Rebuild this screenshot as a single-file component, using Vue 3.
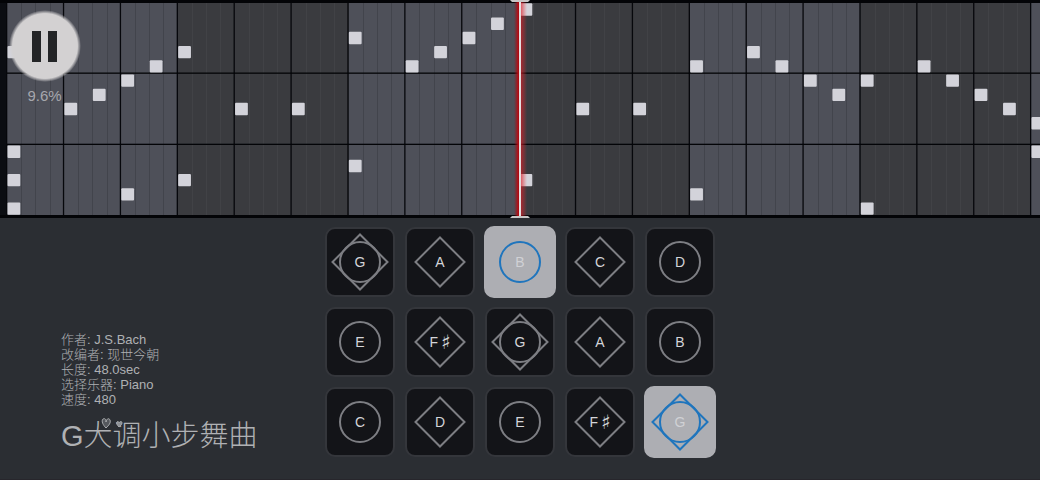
<script setup>
import { ref } from 'vue'

const step = 14.222
const originX = 7
const bars = Array.from({ length: 19 }, (_, i) => i)
const ticks = Array.from({ length: 73 }, (_, i) => i).filter((i) => i % 4 !== 0)
const measures = Array.from({ length: 7 }, (_, i) => i)

// [time step, key row] pairs
const notes = [
  [0, 3], [0, 10], [0, 12], [0, 14], [4, 7], [6, 6], [8, 5], [8, 13], [10, 4],
  [12, 3], [12, 12], [16, 7], [20, 7], [24, 2], [24, 11], [28, 4], [30, 3],
  [32, 2], [34, 1], [36, 0], [36, 12], [40, 7], [44, 7], [48, 4], [48, 13],
  [52, 3], [54, 4], [56, 5], [58, 6], [60, 5], [60, 14], [64, 4], [66, 5],
  [68, 6], [70, 7], [72, 8], [72, 10]
]
const atStep = (s) => originX + s * step
const atRow = (r) => 3 + r * step

const keys = ref([
  { n: 'G', s: 'both' }, { n: 'A', s: 'diamond' }, { n: 'B', s: 'circle', on: true }, { n: 'C', s: 'diamond' }, { n: 'D', s: 'circle' },
  { n: 'E', s: 'circle' }, { n: 'F', sharp: true, s: 'diamond' }, { n: 'G', s: 'both' }, { n: 'A', s: 'diamond' }, { n: 'B', s: 'circle' },
  { n: 'C', s: 'circle' }, { n: 'D', s: 'diamond' }, { n: 'E', s: 'circle' }, { n: 'F', sharp: true, s: 'diamond' }, { n: 'G', s: 'both', on: true }
])

const info = [
  ['作者', 'J.S.Bach'],
  ['改编者', '现世今朝'],
  ['长度', '48.0sec'],
  ['选择乐器', 'Piano'],
  ['速度', '480']
]
</script>

<template>
  <main class="player">
    <header class="roll">
      <svg class="score" viewBox="0 0 1040 218" preserveAspectRatio="xMidYMid slice" aria-label="Piano roll">
        <defs>
          <linearGradient id="glow">
            <stop offset="0" stop-color="#901018" stop-opacity="0" />
            <stop offset="0.3" stop-color="#c00810" stop-opacity="0.9" />
            <stop offset="0.5" stop-color="#e01822" stop-opacity="0.7" />
            <stop offset="1" stop-color="#f03038" stop-opacity="0" />
          </linearGradient>
        </defs>
        <rect width="1040" height="218" fill="#030407" />
        <rect y="3" width="7" height="212" fill="#0b0d12" />
        <rect
          v-for="m in measures" :key="'m' + m" :x="atStep(m * 12)" y="3" :width="step * 12" height="212"
          :fill="m % 2 ? '#3a3b3f' : '#4e5059'"
        />
        <rect
          v-for="t in ticks" :key="'t' + t" :x="Math.round(atStep(t))" y="3" width="1" height="212"
          :fill="Math.floor(t / 12) % 2 ? '#414246' : '#42444c'"
        />
        <rect v-for="b in bars" :key="'b' + b" :x="atStep(b * 4) - 1" y="3" width="1.300" height="212" fill="#06070b" />
        <rect y="72.500" x="7" width="1033" height="1.300" fill="#030407" />
        <rect y="143.700" x="7" width="1033" height="1.300" fill="#030407" />
        <rect
          v-for="(n, i) in notes" :key="'n' + i" :x="atStep(n[0]) + 0.5" :y="atRow(n[1]) + 0.3"
          width="12.800" height="12.400" rx="1" fill="#d3d3da"
        />
        <rect x="514" y="2" width="13" height="214" fill="url(#glow)" />
        <rect x="519" y="2" width="2" height="214" fill="#e4dede" />
        <path d="M510 0h20l-2 2h-16zM512 216h16l2 2h-20z" fill="#c8c6c6" />
      </svg>
      <div class="status">
        <button class="pause" aria-label="Pause">
          <svg viewBox="0 0 72 72" aria-hidden="true"><path d="M23 21h9v31h-9zM39 21h9v31h-9z" fill="#232426" /></svg>
        </button>
        <span class="progress">9.6%</span>
      </div>
    </header>

    <section class="stage">
      <div class="meta">
        <dl class="info">
          <div v-for="row in info" :key="row[0]"><dt>{{ row[0] }}: </dt><dd>{{ row[1] }}</dd></div>
        </dl>
        <h1 class="title">
          G大调小步舞曲
          <svg class="hearts" viewBox="0 0 30 14" aria-hidden="true">
            <path d="M5 10C2 7 0 3 2 1c2-1 3 0 3 3 1-4 3-4 4-2 1 3-1 5-4 8z" fill="#55585d" stroke="#a9abae" />
            <path d="M18 9c-2-2-3-4-2-5s2 0 2 1c1-2 3-2 3 0s-2 3-3 4z" fill="#8d9094" stroke="#a9abae" />
          </svg>
        </h1>
      </div>
      <div class="keypad">
        <button v-for="(k, i) in keys" :key="i" class="key" :class="{ on: k.on }" :aria-pressed="!!k.on" @click="k.on = !k.on">
          <svg class="shape" viewBox="0 0 60 60" aria-hidden="true">
            <path v-if="k.s === 'both'" d="M30 2.500L57.500 30L30 57.500L2.500 30Z" />
            <path v-if="k.s === 'diamond'" d="M30 5.500L54.500 30L30 54.500L5.500 30Z" />
            <circle v-if="k.s !== 'diamond'" cx="30" cy="30" r="20" />
          </svg>
          <span class="name">{{ k.n }}<span v-if="k.sharp" class="sharp">♯</span></span>
        </button>
      </div>
    </section>
  </main>
</template>

<style>
body {
  margin: 0;
  background: #2b2e33;
}
</style>

<style scoped>
.player {
  min-height: 100vh;
  box-sizing: border-box;
  background: #2b2e33;
  border-bottom: 1px solid #27262c;
  font-family: "Liberation Sans", "Noto Sans CJK SC", sans-serif;
  color: #afb1b4;
}
.roll {
  position: relative;
  height: 218px;
}
.score {
  display: block;
  width: 100%;
  height: 100%;
}
.status {
  position: absolute;
  top: 10px;
  left: 8px;
  width: 73px;
  display: flex;
  flex-direction: column;
  align-items: center;
  gap: 5px;
}
.pause {
  width: 72px;
  height: 72px;
  padding: 0;
  border: 0;
  border-radius: 50%;
  background: radial-gradient(circle closest-side, #d3d1d2 90%, rgba(211, 209, 210, 0) 100%);
}
.pause svg {
  display: block;
}
.progress {
  font-size: 15px;
  line-height: 18px;
  color: #a6a7ad;
}
.stage {
  display: grid;
  grid-template-columns: 1fr auto 1fr;
  padding-top: 8px;
}
.meta {
  align-self: end;
  padding: 0 0 2px 61px;
}
.info {
  margin: 0 0 9px;
  font-size: 13px;
  line-height: 15px;
  font-weight: 300;
}
.info div {
  display: flex;
  height: 15px;
  white-space: pre;
}
.info dt,
.info dd {
  margin: 0;
}
.title {
  position: relative;
  margin: 0;
  font-size: 29px;
  font-weight: 300;
  line-height: 40px;
  white-space: nowrap;
}
.hearts {
  position: absolute;
  left: 40px;
  top: 2px;
  width: 30px;
  height: 14px;
}
.keypad {
  display: grid;
  grid-template-columns: repeat(5, 72px);
  grid-auto-rows: 72px;
  gap: 8px;
}
.key {
  display: grid;
  place-items: center;
  margin: 1px;
  padding: 0;
  border: 2px solid #34363b;
  border-radius: 10px;
  background: #131418;
  color: #d4d5d8;
  font-family: inherit;
  font-size: 14px;
}
.key.on {
  margin: 0;
  border-color: #adaeb3;
  background: #adaeb3;
  color: #d0d1d5;
}
.shape,
.name {
  grid-area: 1 / 1;
}
.name {
  display: flex;
  align-items: center;
  gap: 3px;
  line-height: 18px;
}
.sharp {
  font-family: "DejaVu Sans", sans-serif;
  font-size: 20px;
}
.shape {
  width: 60px;
  height: 60px;
  fill: none;
  stroke: #7d7e83;
  stroke-width: 2;
}
.on .shape {
  stroke: #1f75bd;
}
</style>
